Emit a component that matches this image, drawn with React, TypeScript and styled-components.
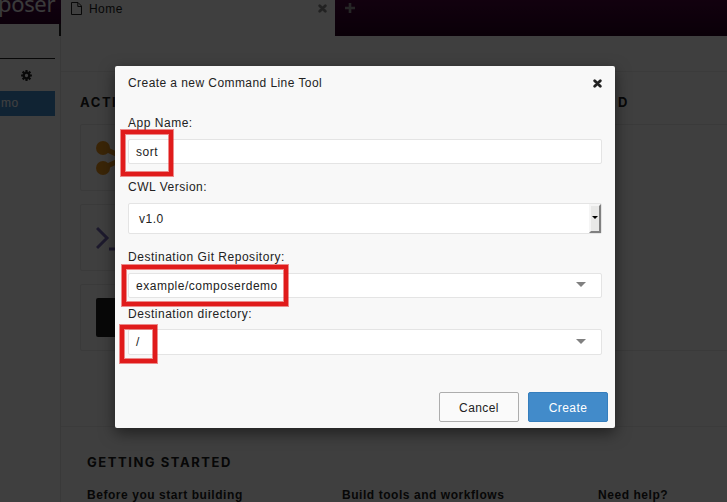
import React from "react";
import styled, { createGlobalStyle } from "styled-components";

const GlobalStyle = createGlobalStyle`
  * { box-sizing: border-box; }
  html, body { margin: 0; overflow: hidden; }
  body {
    font-family: "Liberation Sans", Arial, sans-serif;
    font-size: 12px;
    letter-spacing: 0.43px;
    color: #222;
  }
`;

const Screen = styled.div`
  position: relative;
  display: flex;
  width: 727px;
  height: 502px;
  overflow: hidden;
  background: #f9f9f9;
`;

const Sidebar = styled.aside`
  flex: 0 0 61px;
  min-width: 0;
  border-right: 1px solid #e4e4e4;
`;

const Brand = styled.div`
  display: flex;
  width: 61px;
  height: 24px;
  background: linear-gradient(#420540, #300028);
  color: #e8e8e8;
  font: 22px/30px "Noto Sans", sans-serif;
  letter-spacing: -0.35px;
  white-space: nowrap;
`;

const BrandText = styled.span`
  height: 30px;
  margin-top: -12px;
  margin-left: -2px;
`;

const BrandEdge = styled.div`
  width: 61px;
  height: 12px;
  border-right: 2px solid #222;
`;

const SidebarTools = styled.div`
  display: flex;
  justify-content: flex-end;
  align-items: center;
  width: 55px;
  height: 33px;
  margin-top: 22px;
  padding-right: 23px;
  border-top: 1px solid #222;
`;

const SelectedProject = styled.div`
  width: 55px;
  height: 25px;
  padding-left: 1px;
  line-height: 24px;
  background: #428bca;
  color: #fff;
`;

const Workspace = styled.main`
  display: flex;
  flex-direction: column;
  width: 666px;
`;

const TabBar = styled.header`
  display: flex;
  height: 36px;
  background: linear-gradient(#48053c, #280020);
`;

const Tab = styled.div`
  display: flex;
  align-items: flex-start;
  width: 274px;
  height: 36px;
  padding: 2px 8px 0 10px;
  background: #f9f9f9;
`;

const TabName = styled.span`
  flex: 1;
  padding-left: 7px;
  line-height: 14px;
`;

const TabIcon = styled.span<{ $color: string }>`
  display: flex;
  align-items: center;
  height: 13px;
  color: ${(p) => p.$color};
`;

const NewTab = styled.div`
  padding: 1px 0 0 10px;
`;

const Overview = styled.section`
  height: 356px;
  margin-top: 35px;
  padding: 22px 0 0 19px;
  border-top: 1px solid #ebebeb;
  border-bottom: 1px solid #ebebeb;
  background: #fcfcfc;
`;

const Heading = styled.h2<{ $indent?: number }>`
  margin: 0;
  padding-left: ${(p) => p.$indent ?? 0}px;
  font: 700 13px/16px Inter, sans-serif;
  letter-spacing: 1.55px;
  color: #1c1c1c;
`;

const Columns = styled.div`
  display: grid;
  grid-template-columns: 500px 180px;
  column-gap: 18px;
`;

const OverviewColumn = styled.div`
  display: flex;
  flex-direction: column;
`;

const Actions = styled.div`
  display: grid;
  row-gap: 13px;
  margin-top: 14px;
`;

const Card = styled.div<{ $height: number }>`
  display: flex;
  align-items: center;
  height: ${(p) => p.$height}px;
  padding-left: 15px;
  border: 1px solid #e6e6e6;
  border-radius: 2px;
  background: #fafafa;
`;

const RecentCard = styled(Card)`
  margin: 14px 0 0 -20px;
`;

const Swatch = styled.div`
  width: 40px;
  height: 39px;
  border-radius: 2px;
  background: #222;
`;

const Started = styled.section`
  padding: 27px 0 0 26px;
`;

const Topics = styled.div`
  display: grid;
  grid-template-columns: 255px 256px 129px;
  margin-top: 18px;
  line-height: 14px;
  font-weight: 700;
  letter-spacing: 0.55px;
  color: #1c1c1c;
`;

const Backdrop = styled.div`
  position: absolute;
  inset: 0;
  display: flex;
  justify-content: center;
  align-items: flex-start;
  padding: 66px 112px 0 115px;
  background: rgba(0, 0, 0, 0.75);
`;

const Dialog = styled.form`
  width: 500px;
  height: 362px;
  display: flex;
  flex-direction: column;
  border-radius: 2px;
  background: #f8f8f8;
  box-shadow: 0 5px 15px rgba(0, 0, 0, 0.5);
`;

const DialogHeader = styled.div`
  display: flex;
  justify-content: space-between;
  align-items: center;
  height: 34px;
  padding: 0 13px;
`;

const Fields = styled.div`
  flex: 1;
  padding: 16px 13px 0;
  letter-spacing: 0.52px;
`;

const Label = styled.div<{ $gap?: number }>`
  height: 14px;
  margin-top: ${(p) => p.$gap ?? 0}px;
  line-height: 14px;
`;

const Control = styled.div<{ $height: number; $gap: number; $indent?: number }>`
  display: flex;
  align-items: center;
  justify-content: space-between;
  height: ${(p) => p.$height}px;
  margin-top: ${(p) => p.$gap}px;
  padding-left: ${(p) => p.$indent ?? 7}px;
  border: 1px solid #e4e4e4;
  border-radius: 2px;
  background: #fff;
`;

const Caret = styled.i<{ $lift: number }>`
  width: 0;
  margin: 0 15px ${(p) => p.$lift}px 0;
  border: 5px solid transparent;
  border-top-color: #808080;
  border-bottom: 0;
`;

const SelectButton = styled.div`
  display: flex;
  align-items: center;
  justify-content: center;
  width: 12px;
  height: 29px;
  border: 2px solid;
  border-color: #f5f5f5 #808080 #808080 #f5f5f5;
  background: #e8e8e7;
`;

const SelectArrow = styled.i`
  margin-bottom: 2px;
  border: 3px solid transparent;
  border-top-color: #000;
  border-bottom: 0;
`;

const Footer = styled.div`
  display: flex;
  justify-content: flex-end;
  gap: 9px;
  padding: 0 7px 6px;
`;

const Button = styled.button<{ $primary?: boolean }>`
  width: 80px;
  height: 30px;
  padding: 2px 0 0;
  border: 1px solid ${(p) => (p.$primary ? "#357ebd" : "#adadad")};
  border-radius: 2px;
  background: ${(p) => (p.$primary ? "#428bca" : "#fafafa")};
  color: ${(p) => (p.$primary ? "#fff" : "#222")};
  font: inherit;
  letter-spacing: inherit;
`;

const Highlight = styled.div<{ $x: number; $y: number; $w: number; $h: number }>`
  position: absolute;
  left: ${(p) => p.$x}px;
  top: ${(p) => p.$y}px;
  width: ${(p) => p.$w}px;
  height: ${(p) => p.$h}px;
  border: 4px solid #e01b1b;
  box-shadow: 0 0 0 1px rgba(224, 27, 27, 0.5), inset 0 0 0 1px rgba(224, 27, 27, 0.5);
`;

function CrossIcon() {
  return (
    <svg width="9" height="9" viewBox="0 0 9 9">
      <path d="M1.7 1.7 7.3 7.3 M7.3 1.7 1.7 7.3" stroke="currentColor" strokeWidth="2.8" strokeLinecap="round" />
    </svg>
  );
}

function PlusIcon() {
  return (
    <svg width="10" height="10" viewBox="0 0 10 10">
      <path d="M5 0V10 M0 5H10" stroke="currentColor" strokeWidth="2.6" />
    </svg>
  );
}

function FileIcon() {
  return (
    <svg width="11" height="13" viewBox="0 0 11 13" fill="none" stroke="currentColor">
      <path d="M.5.5H7L10.5 4V12.5H.5Z M6.8.8V4.5H10.3" />
    </svg>
  );
}

function GearIcon() {
  return (
    <svg width="11" height="11" viewBox="0 0 12 12" fill="none" stroke="currentColor">
      <circle cx="6" cy="6" r="3.1" strokeWidth="2.6" />
      <path
        d="M6 .1V2.2 M6 9.8V11.9 M.1 6H2.2 M9.8 6H11.9 M1.8 1.8 3.3 3.3 M8.7 8.7 10.2 10.2 M1.8 10.2 3.3 8.7 M8.7 3.3 10.2 1.8"
        strokeWidth="2.4"
      />
    </svg>
  );
}

function WorkflowIcon() {
  return (
    <svg width="38" height="36" viewBox="0 0 38 36">
      <path d="M7 8 29 18 M7 28 29 18" stroke="#e8921e" strokeWidth="5" />
      <g fill="#e8921e">
        <circle cx="7" cy="8" r="7" />
        <circle cx="7" cy="28" r="7" />
        <circle cx="29" cy="18" r="7" />
      </g>
    </svg>
  );
}

function TerminalIcon() {
  return (
    <svg width="38" height="26" viewBox="0 0 38 26">
      <path d="M1 3 11 13 1 23 M13 24H34" fill="none" stroke="#7568b5" strokeWidth="3" />
    </svg>
  );
}

export default function App() {
  return (
    <>
      <GlobalStyle />
      <Screen>
        <Sidebar>
          <Brand><BrandText>poser</BrandText></Brand>
          <BrandEdge />
          <SidebarTools><GearIcon /></SidebarTools>
          <SelectedProject>mo</SelectedProject>
        </Sidebar>
        <Workspace>
          <TabBar>
            <Tab>
              <TabIcon $color="#222"><FileIcon /></TabIcon>
              <TabName>Home</TabName>
              <TabIcon $color="#888"><CrossIcon /></TabIcon>
            </Tab>
            <NewTab>
              <TabIcon $color="#999"><PlusIcon /></TabIcon>
            </NewTab>
          </TabBar>
          <Overview>
            <Columns>
              <OverviewColumn>
                <Heading>ACTIONS</Heading>
                <Actions>
                  <Card $height={67}><WorkflowIcon /></Card>
                  <Card $height={67}><TerminalIcon /></Card>
                  <Card $height={67}><Swatch /></Card>
                </Actions>
              </OverviewColumn>
              <OverviewColumn>
                <Heading $indent={20}>D</Heading>
                <RecentCard $height={227} />
              </OverviewColumn>
            </Columns>
          </Overview>
          <Started>
            <Heading>GETTING STARTED</Heading>
            <Topics>
              <span>Before you start building</span>
              <span>Build tools and workflows</span>
              <span>Need help?</span>
            </Topics>
          </Started>
        </Workspace>
        <Backdrop>
          <Dialog>
            <DialogHeader>
              <span>Create a new Command Line Tool</span>
              <CrossIcon />
            </DialogHeader>
            <Fields>
              <Label>App Name:</Label>
              <Control $height={25} $gap={9}>sort</Control>
              <Label $gap={16}>CWL Version:</Label>
              <Control $height={31} $gap={9} $indent={10}>
                v1.0
                <SelectButton><SelectArrow /></SelectButton>
              </Control>
              <Label $gap={16}>Destination Git Repository:</Label>
              <Control $height={25} $gap={9}>example/composerdemo<Caret $lift={3} /></Control>
              <Label $gap={9}>Destination directory:</Label>
              <Control $height={26} $gap={8}>/<Caret $lift={1} /></Control>
            </Fields>
            <Footer>
              <Button type="button">Cancel</Button>
              <Button type="button" $primary>Create</Button>
            </Footer>
          </Dialog>
        </Backdrop>
        <Highlight $x={121} $y={130} $w={52} $h={46} />
        <Highlight $x={122} $y={265} $w={166} $h={41} />
        <Highlight $x={120} $y={325} $w={37} $h={38} />
      </Screen>
    </>
  );
}
